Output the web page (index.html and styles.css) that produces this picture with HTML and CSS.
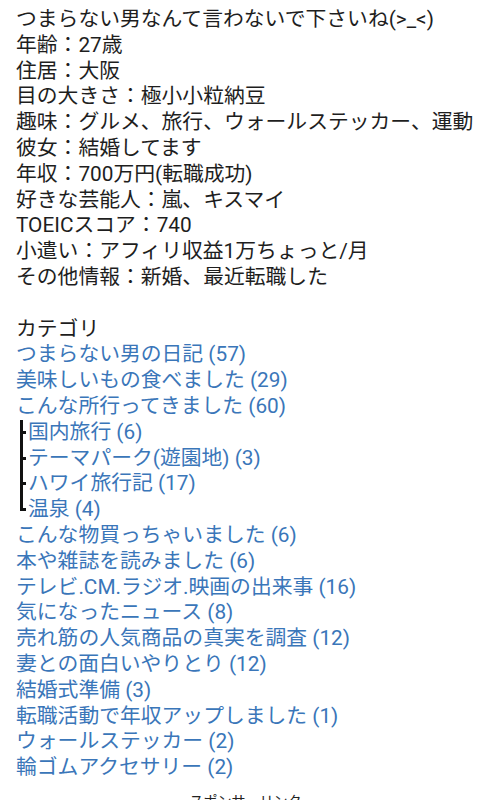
FILE: index.html
```html
<!DOCTYPE html>
<html lang="ja">
<head>
<meta charset="utf-8">
<link rel="stylesheet" href="styles.css">
</head>
<body>
<div class="page">
  <div class="profile">
    <div class="line">つまらない男なんて言わないで下さいね(&gt;_&lt;)</div>
    <div class="line">年齢：27歳</div>
    <div class="line">住居：大阪</div>
    <div class="line">目の大きさ：極小小粒納豆</div>
    <div class="line">趣味：グルメ、旅行、ウォールステッカー、運動</div>
    <div class="line">彼女：結婚してます</div>
    <div class="line">年収：700万円(転職成功)</div>
    <div class="line">好きな芸能人：嵐、キスマイ</div>
    <div class="line">TOEICスコア：740</div>
    <div class="line">小遣い：アフィリ収益1万ちょっと/月</div>
    <div class="line">その他情報：新婚、最近転職した</div>
  </div>
  <div class="category">
    <div class="line">カテゴリ</div>
    <ul class="cats">
      <li><a href="#">つまらない男の日記 (57)</a></li>
      <li><a href="#">美味しいもの食べました (29)</a></li>
      <li><a href="#">こんな所行ってきました (60)</a>
        <ul class="sub">
          <li><a href="#">国内旅行 (6)</a></li>
          <li><a href="#">テーマパーク(遊園地) (3)</a></li>
          <li><a href="#">ハワイ旅行記 (17)</a></li>
          <li class="last"><a href="#">温泉 (4)</a></li>
        </ul>
      </li>
      <li><a href="#">こんな物買っちゃいました (6)</a></li>
      <li><a href="#">本や雑誌を読みました (6)</a></li>
      <li><a href="#">テレビ.CM.ラジオ.映画の出来事 (16)</a></li>
      <li><a href="#">気になったニュース (8)</a></li>
      <li><a href="#">売れ筋の人気商品の真実を調査 (12)</a></li>
      <li><a href="#">妻との面白いやりとり (12)</a></li>
      <li><a href="#">結婚式準備 (3)</a></li>
      <li><a href="#">転職活動で年収アップしました (1)</a></li>
      <li><a href="#">ウォールステッカー (2)</a></li>
      <li><a href="#">輪ゴムアクセサリー (2)</a></li>
    </ul>
  </div>
  <div class="sponsor">スポンサーリンク</div>
</div>
</body>
</html>
```

FILE: styles.css
```css
html, body {
  margin: 0;
  padding: 0;
  background: #ffffff;
}

.page {
  padding: 7px 16px 0 16px;
  font-family: Roboto, "Noto Sans CJK JP", sans-serif;
  font-size: 20.8px;
  line-height: 25.8px;
  color: #1e1e1e;
}

.line {
  white-space: nowrap;
}

.category {
  margin-top: 25.8px;
}

.cats, .sub {
  list-style: none;
  margin: 0;
  padding: 0;
}

.cats li {
  white-space: nowrap;
}

.cats a {
  color: #3a76b9;
  text-decoration: none;
}

.sub {
  padding-left: 12px;
}

.sub li {
  position: relative;
}

.sub li::before {
  content: "";
  position: absolute;
  left: -8px;
  top: 0;
  bottom: 0;
  width: 3px;
  background: #111;
}

.sub li::after {
  content: "";
  position: absolute;
  left: -8px;
  top: 11px;
  width: 6px;
  height: 3px;
  background: #111;
}

.sub li.last::before {
  bottom: auto;
  height: 14px;
}

.sponsor {
  margin-top: 10px;
  text-align: center;
  font-size: 14px;
  line-height: 20px;
  color: #222;
}
```
